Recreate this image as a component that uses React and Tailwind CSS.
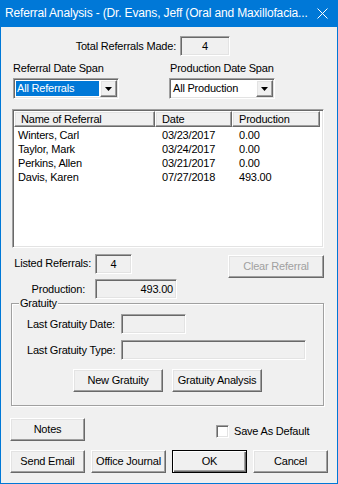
import React from 'react';

const sunken =
  'border border-t-[#a0a0a0] border-l-[#a0a0a0] border-r-white border-b-white shadow-[inset_1px_1px_0_#696969,inset_-1px_-1px_0_#e3e3e3]';
const raised =
  'border border-t-white border-l-white border-r-[#696969] border-b-[#696969] shadow-[inset_-1px_-1px_0_#a0a0a0,inset_1px_1px_0_#e3e3e3]';

const rows = [
  ['Winters, Carl', '03/23/2017', '0.00'],
  ['Taylor, Mark', '03/24/2017', '0.00'],
  ['Perkins, Allen', '03/21/2017', '0.00'],
  ['Davis, Karen', '07/27/2018', '493.00'],
];

function Btn({ className = '', children, disabled, isDefault }) {
  const edge = isDefault
    ? 'border border-black shadow-[inset_1px_1px_0_#fff,inset_-1px_-1px_0_#696969,inset_-2px_-2px_0_#a0a0a0]'
    : raised;
  return (
    <div
      className={`h-[23px] bg-[#f0f0f0] flex items-center justify-center ${edge} ${
        disabled ? 'text-[#a0a0a0]' : 'text-black'
      } ${className}`}
    >
      {children}
    </div>
  );
}

function Field({ className = '', children, align = 'justify-center' }) {
  return <div className={`h-[20px] bg-[#f0f0f0] flex items-center ${align} ${sunken} ${className}`}>{children}</div>;
}

function Combo({ text, selected }) {
  return (
    <div className={`w-[106px] h-[21px] bg-white p-[1px] flex ${sunken}`}>
      <div className="flex-1 p-[1px] flex">
        <div className={`flex-1 flex items-center pl-[1px] ${selected ? 'bg-[#0078d7] text-white' : ''}`}>{text}</div>
      </div>
      <div className={`w-[17px] bg-[#f0f0f0] flex items-center justify-center ${raised}`}>
        <svg width="7" height="4" viewBox="0 0 7 4">
          <path d="M0 0h7L3.5 4z" fill="#000" />
        </svg>
      </div>
    </div>
  );
}

export default function App() {
  return (
    <div className="w-[338px] h-[484px] bg-[#0078d7] px-[1px] pb-[1px] flex flex-col font-['Liberation_Sans',Arial,sans-serif] text-[11px] tracking-[-0.2px] leading-[13px] text-black">
      {/* Title bar */}
      <div className="h-[27px] flex items-center pl-[4px] text-white text-[12px] tracking-[-0.15px]">
        <span className="flex-1 whitespace-nowrap overflow-hidden">
          Referral Analysis - (Dr. Evans, Jeff (Oral and Maxillofacia...
        </span>
        <svg width="11" height="11" viewBox="0 0 11 11" className="mr-[9px] ml-[8px] shrink-0">
          <path d="M0.5 0.5L10.5 10.5M10.5 0.5L0.5 10.5" stroke="#fff" strokeWidth="1" />
        </svg>
      </div>

      <div className="flex-1 bg-[#f0f0f0] flex flex-col">
        {/* Total */}
        <div className="mt-[9px] flex items-center">
          <div className="w-[175px] text-right">Total Referrals Made:</div>
          <Field className="ml-[4px] w-[50px]">4</Field>
        </div>

        {/* Date spans */}
        <div className="mt-[6px] flex pl-[12px]">
          <div className="w-[156px]">
            <div className="h-[13px]">Referral Date Span</div>
            <div className="mt-[3px]">
              <Combo text="All Referrals" selected />
            </div>
          </div>
          <div>
            <div className="h-[13px] pl-[1px]">Production Date Span</div>
            <div className="mt-[3px]">
              <Combo text="All Production" />
            </div>
          </div>
        </div>

        {/* List view */}
        <div className={`mt-[10px] ml-[11px] w-[312px] h-[139px] bg-white p-[1px] ${sunken}`}>
          <div className="flex h-[16px]">
            <div className={`w-[141px] bg-[#f0f0f0] pl-[6px] flex items-center ${raised}`}>Name of Referral</div>
            <div className={`w-[77px] bg-[#f0f0f0] pl-[6px] flex items-center ${raised}`}>Date</div>
            <div className={`w-[88px] bg-[#f0f0f0] pl-[6px] flex items-center ${raised}`}>Production</div>
          </div>
          <div className="pt-[1px]">
            {rows.map((r) => (
              <div key={r[0]} className="flex h-[14px] items-center">
                <div className="w-[141px] pl-[4px]">{r[0]}</div>
                <div className="w-[77px] pl-[7px]">{r[1]}</div>
                <div className="w-[88px] pl-[7px]">{r[2]}</div>
              </div>
            ))}
          </div>
        </div>

        {/* Listed referrals */}
        <div className="mt-[6px] flex items-start h-[24px]">
          <div className="w-[90px] text-right mt-[3px]">Listed Referrals:</div>
          <Field className="ml-[4px] w-[37px]">4</Field>
          <Btn className="ml-[96px] mt-[1px] w-[96px]" disabled>
            Clear Referral
          </Btn>
        </div>

        {/* Production */}
        <div className="mt-[1px] flex items-center">
          <div className="w-[84px] text-right">Production:</div>
          <Field className="ml-[10px] w-[82px] pr-[3px]" align="justify-end">
            493.00
          </Field>
        </div>

        {/* Gratuity group */}
        <fieldset className="ml-[10px] w-[313px] h-[107px] border border-[#a0a0a0] shadow-[inset_1px_1px_0_#fff,1px_1px_0_#fff]">
          <legend className="ml-[7px] px-[1px] leading-[8px] bg-[#f0f0f0]">Gratuity</legend>
          <div className="mt-[7px] flex items-center pl-[15px]">
            <div className="w-[94px]">Last Gratuity Date:</div>
            <Field className="w-[65px]" />
          </div>
          <div className="mt-[6px] flex items-center pl-[15px]">
            <div className="w-[94px]">Last Gratuity Type:</div>
            <Field className="w-[185px]" />
          </div>
          <div className="mt-[9px] flex pl-[61px] gap-[9px]">
            <Btn className="w-[90px]">New Gratuity</Btn>
            <Btn className="w-[90px]">Gratuity Analysis</Btn>
          </div>
        </fieldset>

        {/* Notes row */}
        <div className="mt-[12px] flex items-start">
          <Btn className="ml-[9px] w-[75px]">Notes</Btn>
          <div className="ml-[131px] mt-[7px] flex items-center">
            <div className={`w-[13px] h-[13px] bg-white ${sunken}`} />
            <span className="ml-[5px]">Save As Default</span>
          </div>
        </div>

        {/* Bottom buttons */}
        <div className="mt-[9px] ml-[9px] flex gap-[6px]">
          <Btn className="w-[75px]">Send Email</Btn>
          <Btn className="w-[75px]">Office Journal</Btn>
          <Btn className="w-[75px]" isDefault>
            OK
          </Btn>
          <Btn className="w-[75px]">Cancel</Btn>
        </div>
      </div>
    </div>
  );
}
